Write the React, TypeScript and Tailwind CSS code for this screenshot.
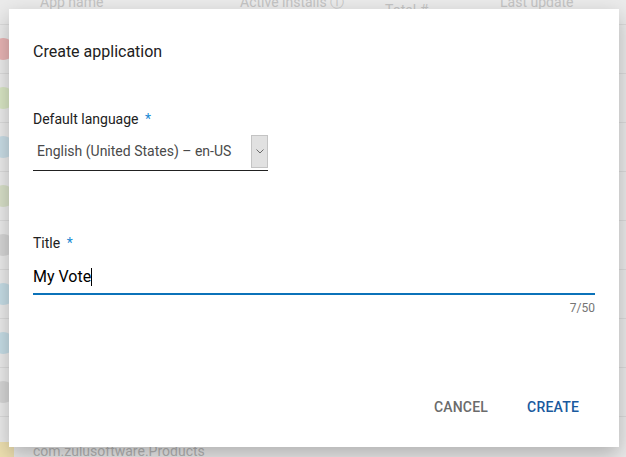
const dots = ['#e8b4b4', '#d9e6c4', '#c9dde6', '#d8e0c8', '#d6d6d6', '#c6dde6', '#c6dde6', '#d6d6d6']

function BackgroundPage() {
  return (
    <div className="flex flex-col text-[#c4c4c4] text-[14px]">
      <div className="h-[24px] relative">
        <span className="absolute left-[40px] -top-[8px]">App name</span>
        <span className="absolute left-[240px] -top-[8px]">Active installs ⓘ</span>
        <span className="absolute left-[385px] top-[0px]">Total #</span>
        <span className="absolute left-[500px] -top-[8px]">Last update</span>
      </div>
      <div className="border-t border-[#dcdcdc]" />
      {dots.map((c, i) => (
        <div key={i} className="flex h-[49px] items-center border-b border-[#dcdcdc]">
          <div className="w-[22px] h-[22px] rounded-full -ml-[8px]" style={{ backgroundColor: c }} />
        </div>
      ))}
      <div className="flex items-center pt-[24px]">
        <div className="w-[20px] h-[20px] rounded-[3px] -ml-[6px] bg-[#eee0b0]" />
        <span className="ml-[19px] text-[#b5b5b5]">com.zulusoftware.Products</span>
      </div>
    </div>
  )
}

export default function App() {
  const title = 'My Vote'

  return (
    <div className="relative w-[626px] h-[457px] overflow-hidden bg-[#ebebeb]" style={{ fontFamily: 'Roboto, "Noto Sans", sans-serif' }}>
      <BackgroundPage />
      <div className="absolute left-[9px] top-[9px] w-[610px] h-[438px] bg-white shadow-[0_8px_20px_rgba(0,0,0,0.25)] flex flex-col px-[24px]">
        <h2 className="mt-[33px] text-[16px] leading-[20px] text-[#212121]">Create application</h2>

        <div className="mt-[48px] flex flex-col">
          <label className="text-[14px] leading-[18px] text-[#212121]">
            Default language <span className="text-[#1a8ad4] ml-[3px]">*</span>
          </label>
          <div className="mt-[5px] w-[235px] h-[38px] border-b border-[#212121] flex items-center justify-between">
            <span className="pl-[4px] text-[14px] text-[#4a4a4a]">English (United States) – en-US</span>
            <div className="w-[17px] h-[33px] mb-[1px] bg-[#e1e1e1] border border-[#c4c4c4] flex items-center justify-center">
              <svg width="8" height="5" viewBox="0 0 8 5" fill="none">
                <path d="M0.5 0.5 L4 4 L7.5 0.5" stroke="#6b6b6b" strokeWidth="1" />
              </svg>
            </div>
          </div>
        </div>

        <div className="mt-[63px] flex flex-col">
          <label className="text-[14px] leading-[18px] text-[#212121]">
            Title <span className="text-[#1a8ad4] ml-[3px]">*</span>
          </label>
          <div className="mt-[8px] border-b-2 border-[#0b72b9] h-[35px] flex items-center">
            <span className="text-[16px] text-black">{title}</span>
            <span className="w-px h-[18px] bg-black" />
          </div>
          <div className="mt-[6px] text-right text-[12px] leading-[14px] text-[#757575]">{title.length}/50</div>
        </div>

        <div className="mt-auto mb-[22px] flex justify-end gap-[23px] pr-[8px]">
          <button className="px-[8px] h-[36px] text-[14px] font-medium text-[#6b6b6b] tracking-[0.2px]">CANCEL</button>
          <button className="px-[8px] h-[36px] text-[14px] font-medium text-[#1a5a9e] tracking-[0.2px]">CREATE</button>
        </div>
      </div>
    </div>
  )
}
